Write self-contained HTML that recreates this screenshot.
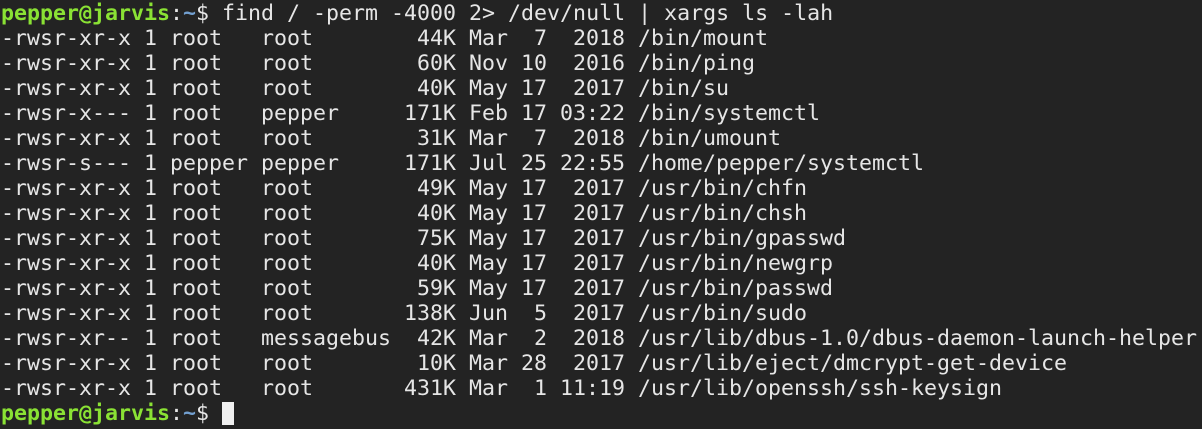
<!DOCTYPE html>
<html><head><style>
html,body{margin:0;padding:0;background:#232323;width:1202px;height:429px;overflow:hidden}
pre{margin:0;padding:0 0 0 1px;font-family:"DejaVu Sans Mono","Liberation Mono",monospace;font-size:21.6px;line-height:25px;color:#e6e6e6;position:relative;top:1px}
.g{color:#8ae234;font-weight:bold}.b{color:#729fcf;font-weight:bold}
.c{display:inline-block;width:12px;height:23px;background:#f0f0f0;vertical-align:-5px}
</style></head><body><pre><span class="g">pepper@jarvis</span>:<span class="b">~</span>$ find / -perm -4000 2&gt; /dev/null | xargs ls -lah
-rwsr-xr-x 1 root   root        44K Mar  7  2018 /bin/mount
-rwsr-xr-x 1 root   root        60K Nov 10  2016 /bin/ping
-rwsr-xr-x 1 root   root        40K May 17  2017 /bin/su
-rwsr-x--- 1 root   pepper     171K Feb 17 03:22 /bin/systemctl
-rwsr-xr-x 1 root   root        31K Mar  7  2018 /bin/umount
-rwsr-s--- 1 pepper pepper     171K Jul 25 22:55 /home/pepper/systemctl
-rwsr-xr-x 1 root   root        49K May 17  2017 /usr/bin/chfn
-rwsr-xr-x 1 root   root        40K May 17  2017 /usr/bin/chsh
-rwsr-xr-x 1 root   root        75K May 17  2017 /usr/bin/gpasswd
-rwsr-xr-x 1 root   root        40K May 17  2017 /usr/bin/newgrp
-rwsr-xr-x 1 root   root        59K May 17  2017 /usr/bin/passwd
-rwsr-xr-x 1 root   root       138K Jun  5  2017 /usr/bin/sudo
-rwsr-xr-- 1 root   messagebus  42K Mar  2  2018 /usr/lib/dbus-1.0/dbus-daemon-launch-helper
-rwsr-xr-x 1 root   root        10K Mar 28  2017 /usr/lib/eject/dmcrypt-get-device
-rwsr-xr-x 1 root   root       431K Mar  1 11:19 /usr/lib/openssh/ssh-keysign
<span class="g">pepper@jarvis</span>:<span class="b">~</span>$ <span class="c"></span></pre></body></html>
